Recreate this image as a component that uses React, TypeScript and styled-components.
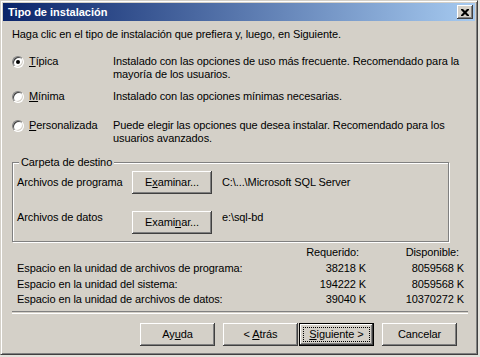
import React from "react";
import styled, { createGlobalStyle } from "styled-components";

const GlobalStyle = createGlobalStyle`
  html, body {
    margin: 0;
    padding: 0;
    background: #e4e2dc;
  }
  body {
    font-family: "Liberation Sans", Arial, sans-serif;
    font-size: 11px;
    letter-spacing: -0.1px;
    color: #000;
  }
`;

const Window = styled.div`
  width: 478px;
  height: 355px;
  box-sizing: border-box;
  background: #d4d0c8;
  border: 1px solid;
  border-color: #d4d0c8 #404040 #404040 #d4d0c8;
  box-shadow: inset 1px 1px 0 #fff, inset -1px -1px 0 #808080;
  padding: 2px;
  display: flex;
  flex-direction: column;
`;

const TitleBar = styled.div`
  height: 18px;
  flex-shrink: 0;
  display: flex;
  align-items: center;
  justify-content: space-between;
  padding: 0 2px 0 2px;
  background: linear-gradient(to right, #0a246a, #a6caf0);
`;

const Title = styled.span`
  color: #fff;
  font-weight: bold;
  font-size: 11px;
  line-height: 13px;
  letter-spacing: 0;
`;

const CloseBtn = styled.div`
  width: 16px;
  height: 14px;
  box-sizing: border-box;
  background: #d4d0c8;
  box-shadow: inset -1px -1px 0 #404040, inset 1px 1px 0 #fff,
    inset -2px -2px 0 #808080;
  display: flex;
  align-items: center;
  justify-content: center;
`;

const Body = styled.div`
  flex: 1;
  display: flex;
  flex-direction: column;
  padding: 0 7px 0 9px;
  line-height: 13px;
`;

const Intro = styled.div`
  margin-top: 7px;
`;

const OptionRow = styled.div<{ $top: number }>`
  display: grid;
  grid-template-columns: 101px 1fr;
  margin-top: ${(p) => p.$top}px;
`;

const OptionLabel = styled.label`
  display: flex;
  align-items: flex-start;
  gap: 5px;
`;

const Radio = styled.span<{ $checked?: boolean }>`
  width: 12px;
  height: 12px;
  box-sizing: border-box;
  border-radius: 50%;
  background: #fff;
  border: 1px solid;
  border-color: #808080 #fff #fff #808080;
  box-shadow: inset 1px 1px 0 #404040, inset -1px -1px 0 #d4d0c8;
  display: flex;
  align-items: center;
  justify-content: center;
  flex-shrink: 0;
  margin-top: 1px;
  &::after {
    content: "";
    width: 4px;
    height: 4px;
    border-radius: 50%;
    background: ${(p) => (p.$checked ? "#000" : "transparent")};
  }
`;

const Key = styled.span`
  text-decoration: underline;
  text-underline-offset: 1px;
`;

const GroupBox = styled.div`
  position: relative;
  margin: 17px 19px 0 0;
  height: 80px;
  box-sizing: border-box;
  border: 1px solid #808080;
  box-shadow: 1px 1px 0 #fff, inset 1px 1px 0 #fff;
  padding: 8px 4px 0 4px;
`;

const Legend = styled.span`
  position: absolute;
  top: -7px;
  left: 6px;
  padding: 0 2px;
  background: #d4d0c8;
`;

const FolderRow = styled.div<{ $align: string; $top: number }>`
  display: flex;
  align-items: ${(p) => p.$align};
  margin-top: ${(p) => p.$top}px;
`;

const FolderLabel = styled.span`
  width: 115px;
`;

const PathText = styled.span`
  margin-left: 10px;
`;

const Button = styled.div<{ $w?: number; $default?: boolean }>`
  width: ${(p) => p.$w ?? 75}px;
  height: 23px;
  box-sizing: border-box;
  background: #d4d0c8;
  display: flex;
  align-items: center;
  justify-content: center;
  position: relative;
  border: 1px solid ${(p) => (p.$default ? "#000" : "transparent")};
  box-shadow: inset -1px -1px 0 #404040, inset 1px 1px 0 #fff,
    inset -2px -2px 0 #808080;
  ${(p) =>
    p.$default &&
    `
    &::after {
      content: "";
      position: absolute;
      inset: 3px;
      border: 1px dotted #000;
    }
  `}
`;

const PlainButton = styled(Button)`
  border: none;
`;

const Stats = styled.div`
  display: grid;
  grid-template-columns: 1fr 98px 98px;
  grid-auto-rows: 15.7px;
  align-items: center;
  margin: 3px 4px 0 5px;
`;

const Num = styled.span<{ $pad?: number }>`
  text-align: right;
  padding-right: ${(p) => p.$pad ?? 0}px;
`;

const Separator = styled.div`
  margin-top: 3px;
  height: 1px;
  border-top: 1px solid #808080;
  border-bottom: 1px solid #fff;
`;

const ButtonRow = styled.div`
  display: flex;
  justify-content: flex-end;
  margin-top: 9px;
  padding-right: 11px;
`;

const Gap = styled.span<{ $w: number }>`
  width: ${(p) => p.$w}px;
`;

const options = [
  {
    top: 14,
    key: "T",
    rest: "ípica",
    checked: true,
    desc: "Instalado con las opciones de uso más frecuente. Recomendado para la mayoría de los usuarios.",
  },
  {
    top: 9,
    key: "M",
    rest: "ínima",
    checked: false,
    desc: "Instalado con las opciones mínimas necesarias.",
  },
  {
    top: 16,
    key: "P",
    rest: "ersonalizada",
    checked: false,
    desc: "Puede elegir las opciones que desea instalar. Recomendado para los usuarios avanzados.",
  },
];

const stats = [
  ["Espacio en la unidad de archivos de programa:", "38218 K", "8059568 K"],
  ["Espacio en la unidad del sistema:", "194222 K", "8059568 K"],
  ["Espacio en la unidad de archivos de datos:", "39040 K", "10370272 K"],
];

export default function App() {
  return (
    <>
      <GlobalStyle />
      <Window>
        <TitleBar>
          <Title>&nbsp;Tipo de instalación</Title>
          <CloseBtn>
            <svg width="8" height="7" viewBox="0 0 8 7">
              <path
                d="M0 0h2l2 2 2-2h2v1L5.5 3.5 8 6v1H6L4 5 2 7H0V6l2.5-2.5L0 1z"
                fill="#000"
              />
            </svg>
          </CloseBtn>
        </TitleBar>
        <Body>
          <Intro>
            Haga clic en el tipo de instalación que prefiera y, luego, en
            Siguiente.
          </Intro>
          {options.map((o) => (
            <OptionRow key={o.key} $top={o.top}>
              <OptionLabel>
                <Radio $checked={o.checked} />
                <span>
                  <Key>{o.key}</Key>
                  {o.rest}
                </span>
              </OptionLabel>
              <span>{o.desc}</span>
            </OptionRow>
          ))}
          <GroupBox>
            <Legend>Carpeta de destino</Legend>
            <FolderRow $align="center" $top={0}>
              <FolderLabel>Archivos de programa</FolderLabel>
              <PlainButton $w={80}>
                <span>
                  E<Key>x</Key>aminar...
                </span>
              </PlainButton>
              <PathText>C:\...\Microsoft SQL Server</PathText>
            </FolderRow>
            <FolderRow $align="flex-start" $top={17}>
              <FolderLabel>Archivos de datos</FolderLabel>
              <PlainButton $w={80}>
                <span>
                  Exami<Key>n</Key>ar...
                </span>
              </PlainButton>
              <PathText>e:\sql-bd</PathText>
            </FolderRow>
          </GroupBox>
          <Stats>
            <span />
            <Num $pad={7}>Requerido:</Num>
            <Num $pad={5}>Disponible:</Num>
            {stats.map(([label, req, avail]) => (
              <React.Fragment key={label}>
                <span>{label}</span>
                <Num>{req}</Num>
                <Num>{avail}</Num>
              </React.Fragment>
            ))}
          </Stats>
          <Separator />
          <ButtonRow>
            <PlainButton>
              <span>
                Ay<Key>u</Key>da
              </span>
            </PlainButton>
            <Gap $w={8} />
            <PlainButton>
              <span>
                &lt; <Key>A</Key>trás
              </span>
            </PlainButton>
            <Gap $w={1} />
            <Button $default>
              <span>
                <Key>S</Key>iguiente &gt;
              </span>
            </Button>
            <Gap $w={8} />
            <PlainButton>Cancelar</PlainButton>
          </ButtonRow>
        </Body>
      </Window>
    </>
  );
}
